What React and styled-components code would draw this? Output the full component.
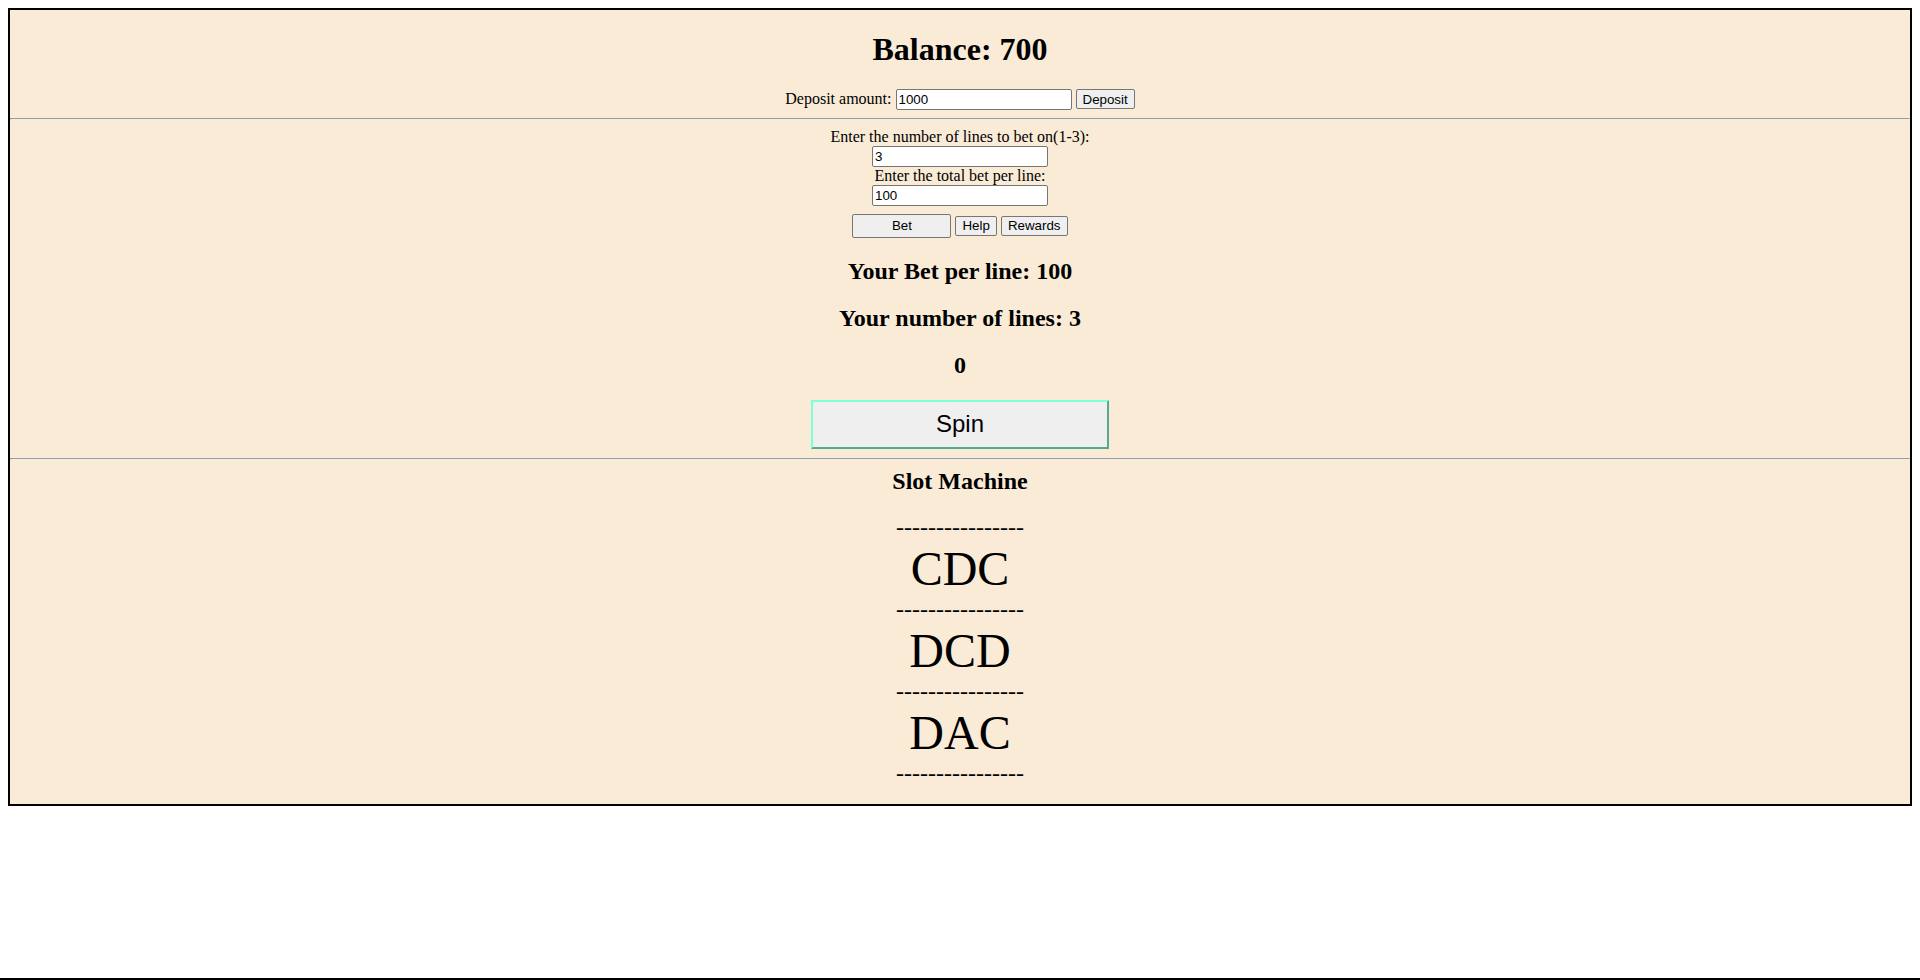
import React from 'react'
import styled, { createGlobalStyle } from 'styled-components'

const GlobalStyle = createGlobalStyle`
    body {
        margin: 8px;
        background-color: #ffffff;
        color: #000000;
        font-family: "Liberation Serif", "Times New Roman", serif;
        font-size: 16px;
    }
`

const Machine = styled.div`
    border: 2px solid #000000;
    background-color: antiquewhite;
    text-align: center;
`

const Section = styled.div`
    padding-bottom: ${props => props.$bottom || 0}px;
`

const Divider = styled.hr`
    margin: 8px 0;
    border: 1px inset;
    color: gray;
`

const Balance = styled.h1`
    font-size: 32px;
    margin: 21.44px 0 20.44px;
`

const DepositRow = styled.div`
    line-height: normal;
`

const TextInput = styled.input`
    box-sizing: border-box;
    width: 176px;
    height: 21px;
    padding: 1px 2px;
    border: 1px solid #767676;
    border-radius: 2px;
    background-color: #ffffff;
    color: #000000;
    font-family: "Liberation Sans", Arial, sans-serif;
    font-size: 13.333px;
    display: ${props => (props.$block ? 'block' : 'inline-block')};
    margin: ${props => (props.$block ? '0 auto' : '0')};
`

const Button = styled.button`
    box-sizing: border-box;
    height: ${props => props.$height || 20}px;
    width: ${props => (props.$width ? props.$width + 'px' : 'auto')};
    padding: 1px 6px;
    border: 1px solid #767676;
    border-radius: 2px;
    background-color: #efefef;
    color: #000000;
    font-family: "Liberation Sans", Arial, sans-serif;
    font-size: 13.333px;
`

const Prompt = styled.div`
    line-height: normal;
`

const ButtonRow = styled.div`
    display: flex;
    justify-content: center;
    align-items: center;
    gap: 4px;
    margin-top: 8px;
`

const Stat = styled.h2`
    font-size: 24px;
    margin: 19.92px 0;
`

const SpinButton = styled.button`
    box-sizing: border-box;
    width: 298px;
    height: 49px;
    border: 2px outset aquamarine;
    background-color: #efefef;
    color: #000000;
    font-family: "Liberation Sans", Arial, sans-serif;
    font-size: 24px;
    vertical-align: bottom;
`

const SpinRow = styled.div`
    line-height: 0;
    padding-top: 1px;
    padding-bottom: 1px;
`

const SlotTitle = styled.h2`
    font-size: 24px;
    margin: 0 0 19.92px;
`

const Dashes = styled.div`
    font-size: 24px;
    line-height: normal;
`

const Reel = styled.div`
    font-size: 48px;
    line-height: normal;
`

const BottomEdge = styled.div`
    position: fixed;
    left: 0;
    right: 0;
    bottom: 0;
    height: 0;
    border-top: 2px solid #000000;
`

const reels = ['CDC', 'DCD', 'DAC']
const dashes = '----------------'

function App () {
    return (
        <>
            <GlobalStyle />
            <Machine>
                <Section>
                    <Balance>Balance: 700</Balance>
                    <DepositRow>
                        Deposit amount: <TextInput defaultValue="1000" /> <Button>Deposit</Button>
                    </DepositRow>
                </Section>
                <Divider />
                <Section>
                    <Prompt>Enter the number of lines to bet on(1-3):</Prompt>
                    <TextInput $block defaultValue="3" />
                    <Prompt>Enter the total bet per line:</Prompt>
                    <TextInput $block defaultValue="100" />
                    <ButtonRow>
                        <Button $width={99} $height={24}>Bet</Button>
                        <Button>Help</Button>
                        <Button>Rewards</Button>
                    </ButtonRow>
                    <Stat>Your Bet per line: 100</Stat>
                    <Stat>Your number of lines: 3</Stat>
                    <Stat>0</Stat>
                    <SpinRow>
                        <SpinButton>Spin</SpinButton>
                    </SpinRow>
                </Section>
                <Divider />
                <Section $bottom={17}>
                    <SlotTitle>Slot Machine</SlotTitle>
                    <Dashes>{dashes}</Dashes>
                    {reels.map(r => (
                        <React.Fragment key={r}>
                            <Reel>{r}</Reel>
                            <Dashes>{dashes}</Dashes>
                        </React.Fragment>
                    ))}
                </Section>
            </Machine>
            <BottomEdge />
        </>
    )
}

export default App
